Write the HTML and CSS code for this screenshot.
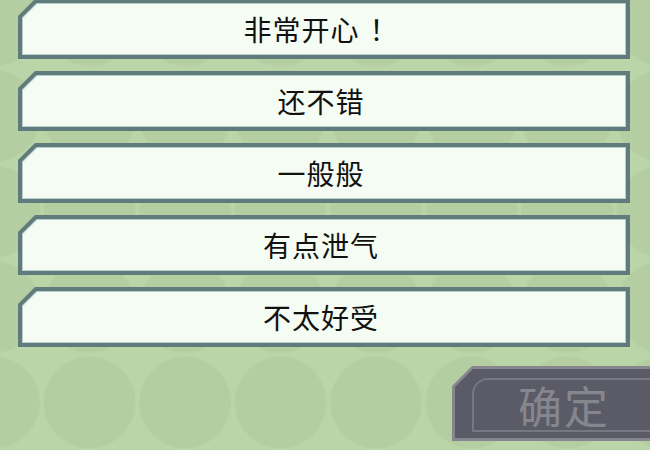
FILE: index.html
```html
<!DOCTYPE html>
<html lang="zh">
<head>
<meta charset="utf-8">
<link rel="stylesheet" href="styles.css">
</head>
<body>
<div class="screen">
  <div class="list">
    <div class="opt"><div class="opt-line"><div class="opt-fill">非常开心<span class="bang">！</span></div></div></div>
    <div class="opt"><div class="opt-line"><div class="opt-fill">还不错</div></div></div>
    <div class="opt"><div class="opt-line"><div class="opt-fill">一般般</div></div></div>
    <div class="opt"><div class="opt-line"><div class="opt-fill">有点泄气</div></div></div>
    <div class="opt"><div class="opt-line"><div class="opt-fill">不太好受</div></div></div>
  </div>
  <div class="footer">
    <div class="btn"><div class="btn-fill"><div class="btn-ring">确定</div></div></div>
  </div>
</div>
</body>
</html>
```
FILE: styles.css
```css
html, body {
  margin: 0;
  padding: 0;
}
body {
  width: 650px;
  height: 450px;
  overflow: hidden;
  font-family: "Noto Sans CJK SC", "Noto Sans", sans-serif;
}
.screen {
  width: 650px;
  height: 450px;
  overflow: hidden;
  background-color: #bad5a8;
  background-image: radial-gradient(circle at 48px 48px, #b4cea1 0, #b4cea1 45px, rgba(186,213,168,0) 46.5px);
  background-size: 95.5px 95.5px;
  background-position: -54px 68px;
}
.list {
  display: flex;
  flex-direction: column;
  gap: 12px;
  margin-top: -1px;
  padding-left: 18px;
  padding-right: 20px;
}
.opt {
  height: 60px;
  box-sizing: border-box;
  padding: 4px;
  background: #5f7b7c;
  clip-path: polygon(17px 0, 100% 0, 100% 100%, 0 100%, 0 17px);
}
.opt-line {
  height: 100%;
  box-sizing: border-box;
  padding: 1px;
  background: #b9cbca;
  clip-path: polygon(14.6px 0, 100% 0, 100% 100%, 0 100%, 0 14.6px);
}
.opt-fill {
  height: 100%;
  background: #f5fcf3;
  clip-path: polygon(14px 0, 100% 0, 100% 100%, 0 100%, 0 14px);
  display: flex;
  align-items: center;
  justify-content: center;
  font-size: 28px;
  font-weight: 400;
  color: #111;
  letter-spacing: 1px;
  padding-right: 6px;
}
.bang {
  margin-left: 10px;
}
.footer {
  display: flex;
  padding-left: 452px;
  margin-top: 19px;
}
.btn {
  width: 220px;
  height: 75px;
  flex: none;
  box-sizing: border-box;
  padding: 3px;
  background: #86868e;
  clip-path: polygon(20px 0, 100% 0, 100% 100%, 0 100%, 0 20px);
}
.btn-fill {
  height: 100%;
  box-sizing: border-box;
  background: #5b5b67;
  clip-path: polygon(18px 0, 100% 0, 100% 100%, 0 100%, 0 18px);
  padding: 9px 0 6px 17px;
}
.btn-ring {
  height: 100%;
  box-sizing: border-box;
  border: 2px solid #777781;
  border-right: none;
  border-top-left-radius: 16px;
  display: flex;
  align-items: center;
  padding-left: 44px;
  font-size: 44px;
  font-weight: 400;
  color: #86868e;
  letter-spacing: 2px;
}
```
